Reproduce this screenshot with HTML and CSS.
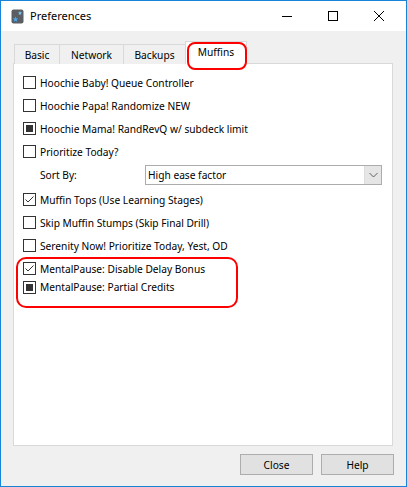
FILE: index.html
```html
<!DOCTYPE html>
<html>
<head>
<meta charset="utf-8">
<link rel="stylesheet" href="styles.css">
</head>
<body>
<div class="window">
  <div class="titlebar">
    <svg class="app-icon" width="13" height="16" viewBox="0 0 13 16">
      <rect x="0.5" y="1.5" width="12" height="14" rx="2" fill="#5a5e63"/>
      <path d="M4.5 8.5 L5.3 10.3 L7.2 10.5 L5.8 11.8 L6.2 13.7 L4.5 12.7 L2.8 13.7 L3.2 11.8 L1.8 10.5 L3.7 10.3 Z" fill="#4aa3e8"/>
      <path d="M9 3 L9.6 4.3 L11 4.5 L10 5.5 L10.2 6.9 L9 6.2 L7.8 6.9 L8 5.5 L7 4.5 L8.4 4.3 Z" fill="#7cc0f0"/>
    </svg>
    <span class="title">Preferences</span>
    <div class="controls">
      <svg class="ctl" width="46" height="30" viewBox="0 0 46 30"><line x1="18" y1="15.5" x2="28" y2="15.5" stroke="#000" stroke-width="1"/></svg>
      <svg class="ctl" width="46" height="30" viewBox="0 0 46 30"><rect x="18.5" y="10.5" width="9" height="9" fill="none" stroke="#000" stroke-width="1"/></svg>
      <svg class="ctl" width="46" height="30" viewBox="0 0 46 30"><path d="M18 10 L28 20 M28 10 L18 20" stroke="#000" stroke-width="1"/></svg>
    </div>
  </div>
  <div class="body">
    <div class="tabwidget">
      <div class="tabbar">
        <div class="tab t-basic">Basic</div>
        <div class="tab t-network">Network</div>
        <div class="tab t-backups">Backups</div>
        <div class="tab t-muffins selected">Muffins</div>
      </div>
      <div class="pane">
        <label class="row"><span class="cb"></span>Hoochie Baby! Queue Controller</label>
        <label class="row"><span class="cb"></span>Hoochie Papa! Randomize NEW</label>
        <label class="row"><span class="cb partial"><span class="fill"></span></span>Hoochie Mama! RandRevQ w/ subdeck limit</label>
        <label class="row"><span class="cb"></span>Prioritize Today?</label>
        <div class="sortrow">
          <span class="sortlabel">Sort By:</span>
          <div class="combo">
            <span class="combo-text">High ease factor</span>
            <span class="combo-btn">
              <svg width="9" height="6" viewBox="0 0 9 6"><path d="M0.5 1 L4.5 5 L8.5 1" fill="none" stroke="#606060" stroke-width="1"/></svg>
            </span>
          </div>
        </div>
        <label class="row after-sort"><span class="cb"><svg width="11" height="11" viewBox="0 0 11 11"><path d="M1.5 5.5 L4 8 L9.5 2.5" fill="none" stroke="#333" stroke-width="1"/></svg></span>Muffin Tops (Use Learning Stages)</label>
        <label class="row"><span class="cb"></span>Skip Muffin Stumps (Skip Final Drill)</label>
        <label class="row"><span class="cb"></span>Serenity Now! Prioritize Today, Yest, OD</label>
        <label class="row"><span class="cb"><svg width="11" height="11" viewBox="0 0 11 11"><path d="M1.5 5.5 L4 8 L9.5 2.5" fill="none" stroke="#333" stroke-width="1"/></svg></span>MentalPause: Disable Delay Bonus</label>
        <label class="row tight"><span class="cb partial"><span class="fill"></span></span>MentalPause: Partial Credits</label>
      </div>
    </div>
    <div class="buttons">
      <button class="btn">Close</button>
      <button class="btn">Help</button>
    </div>
  </div>
  <div class="mark mark-tab"></div>
  <div class="mark mark-rows"></div>
</div>
</body>
</html>
```

FILE: styles.css
```css
* { box-sizing: border-box; }
html, body { margin: 0; padding: 0; background: #fff; }
body {
  font-family: "Noto Sans", "Open Sans", sans-serif;
  font-size: 10.2px;
  color: #000;
}
.window {
  position: relative;
  width: 407px;
  height: 487px;
  border: 1px solid #1883d7;
  display: flex;
  flex-direction: column;
  background: #f0f0f0;
}
.titlebar {
  height: 30px;
  background: #fff;
  display: flex;
  align-items: center;
  flex: none;
}
.app-icon { margin-left: 10px; flex: none; }
.title { margin-left: 6px; font-size: 11px; line-height: 16px; }
.controls { margin-left: auto; display: flex; margin-right: 4px; }
.ctl { display: block; }
.body {
  flex: 1;
  display: flex;
  flex-direction: column;
  padding: 10px 13px 0 12px;
}
.tabwidget { display: flex; flex-direction: column; }
.tabbar {
  display: flex;
  align-items: flex-end;
  height: 23px;
  padding-left: 1px;
  margin-bottom: -1px;
  position: relative;
  z-index: 1;
}
.tab {
  height: 20px;
  border: 1px solid #d9d9d9;
  border-bottom: none;
  background: #f0f0f0;
  display: flex;
  align-items: center;
  justify-content: center;
  line-height: 14px;
  padding-top: 1px;
}
.tab + .tab { margin-left: -1px; }
.t-basic { width: 46px; }
.t-network { width: 65px; }
.t-backups { width: 63px; }
.t-muffins { width: 62px; }
.tab.selected {
  height: 23px;
  background: #fff;
  padding-bottom: 3px;
}
.pane {
  height: 383px;
  background: #fff;
  border: 1px solid #d9d9d9;
  padding: 7px 0 0 9px;
  display: flex;
  flex-direction: column;
}
.row {
  display: flex;
  align-items: center;
  height: 23px;
  white-space: nowrap;
}
.row.tight { height: 14px; }
.cb {
  width: 13px;
  height: 13px;
  border: 1px solid #333;
  background: #fff;
  margin-right: 4px;
  flex: none;
  display: flex;
  align-items: center;
  justify-content: center;
}
.cb svg { display: block; }
.cb .fill { width: 7px; height: 7px; background: #333; display: block; }
.sortrow {
  display: flex;
  align-items: center;
  height: 20px;
  margin-top: 2px;
  padding-left: 17px;
}
.sortlabel { width: 105px; }
.combo {
  width: 237px;
  height: 20px;
  border: 1px solid #acacac;
  display: flex;
  align-items: center;
  background: #fff;
}
.combo-text { flex: 1; padding-left: 2px; }
.combo-btn {
  width: 17px;
  height: 18px;
  background: #e5e5e5;
  border-left: 1px solid #dcdcdc;
  display: flex;
  align-items: center;
  justify-content: center;
}
.after-sort { margin-top: 3px; }
.buttons {
  display: flex;
  justify-content: flex-end;
  gap: 8px;
  margin-top: 8px;
  margin-right: -1px;
}
.btn {
  width: 73px;
  height: 21px;
  background: #e1e1e1;
  border: 1px solid #adadad;
  font-family: "Noto Sans", "Open Sans", sans-serif;
  font-size: 10.2px;
  color: #000;
  padding: 0;
  line-height: 14px;
}
.mark {
  position: absolute;
  z-index: 5;
  border: 2px solid #ff0000;
  pointer-events: none;
}
.mark-tab { left: 186px; top: 41px; width: 60px; height: 28px; border-radius: 8px; }
.mark-rows { left: 15px; top: 256px; width: 222px; height: 51px; border-radius: 10px; }
```
